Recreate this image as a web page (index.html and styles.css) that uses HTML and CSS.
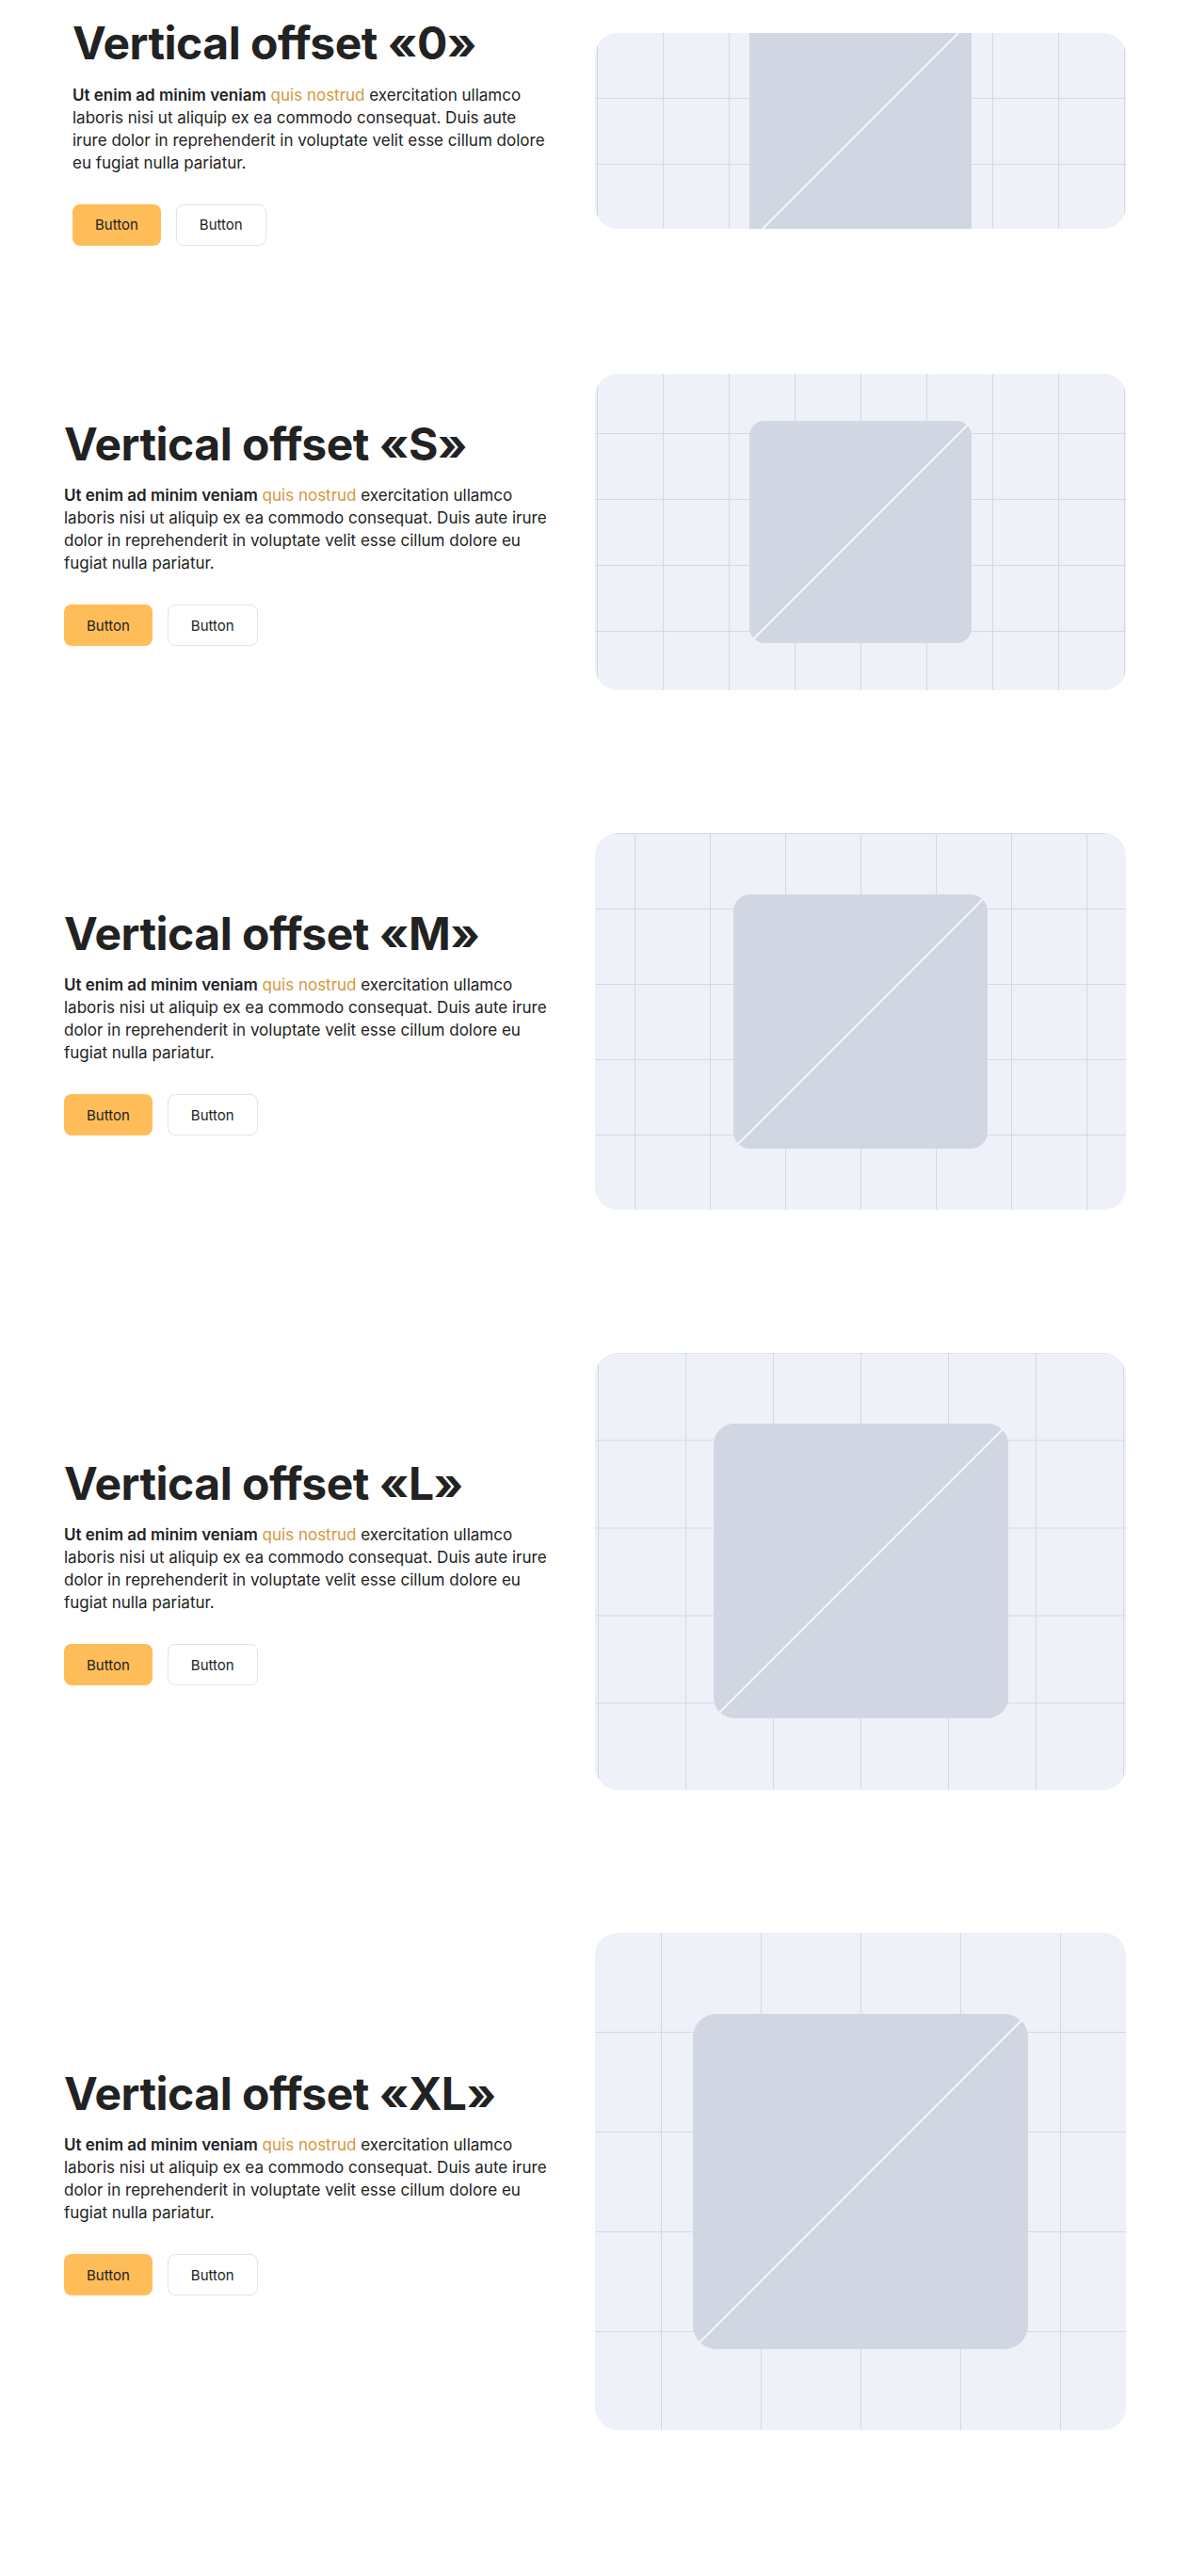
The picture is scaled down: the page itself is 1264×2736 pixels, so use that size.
FILE: index.html
```html
<!DOCTYPE html>
<html lang="en">
<head>
<meta charset="utf-8">
<title>Vertical offset</title>
<link rel="stylesheet" href="styles.css">
</head>
<body>
<main class="page">
  <section class="row row--first">
    <div class="copy copy--indent">
      <h2 class="title">Vertical offset «0»</h2>
      <p class="text"><b>Ut enim ad minim veniam</b> <span class="accent">quis nostrud</span> exercitation ullamco laboris nisi ut aliquip ex ea commodo consequat. Duis aute irure dolor in reprehenderit in voluptate velit esse cillum dolore eu fugiat nulla pariatur.</p>
      <div class="actions"><button class="btn btn--primary">Button</button><button class="btn btn--ghost">Button</button></div>
    </div>
    <div class="media media--0"><div class="pic"></div></div>
  </section>

  <section class="row">
    <div class="copy">
      <h2 class="title">Vertical offset «S»</h2>
      <p class="text"><b>Ut enim ad minim veniam</b> <span class="accent">quis nostrud</span> exercitation ullamco laboris nisi ut aliquip ex ea commodo consequat. Duis aute irure dolor in reprehenderit in voluptate velit esse cillum dolore eu fugiat nulla pariatur.</p>
      <div class="actions"><button class="btn btn--primary">Button</button><button class="btn btn--ghost">Button</button></div>
    </div>
    <div class="media media--s"><div class="pic"></div></div>
  </section>

  <section class="row">
    <div class="copy">
      <h2 class="title">Vertical offset «M»</h2>
      <p class="text"><b>Ut enim ad minim veniam</b> <span class="accent">quis nostrud</span> exercitation ullamco laboris nisi ut aliquip ex ea commodo consequat. Duis aute irure dolor in reprehenderit in voluptate velit esse cillum dolore eu fugiat nulla pariatur.</p>
      <div class="actions"><button class="btn btn--primary">Button</button><button class="btn btn--ghost">Button</button></div>
    </div>
    <div class="media media--m"><div class="pic"></div></div>
  </section>

  <section class="row">
    <div class="copy">
      <h2 class="title">Vertical offset «L»</h2>
      <p class="text"><b>Ut enim ad minim veniam</b> <span class="accent">quis nostrud</span> exercitation ullamco laboris nisi ut aliquip ex ea commodo consequat. Duis aute irure dolor in reprehenderit in voluptate velit esse cillum dolore eu fugiat nulla pariatur.</p>
      <div class="actions"><button class="btn btn--primary">Button</button><button class="btn btn--ghost">Button</button></div>
    </div>
    <div class="media media--l"><div class="pic"></div></div>
  </section>

  <section class="row">
    <div class="copy">
      <h2 class="title">Vertical offset «XL»</h2>
      <p class="text"><b>Ut enim ad minim veniam</b> <span class="accent">quis nostrud</span> exercitation ullamco laboris nisi ut aliquip ex ea commodo consequat. Duis aute irure dolor in reprehenderit in voluptate velit esse cillum dolore eu fugiat nulla pariatur.</p>
      <div class="actions"><button class="btn btn--primary">Button</button><button class="btn btn--ghost">Button</button></div>
    </div>
    <div class="media media--xl"><div class="pic"></div></div>
  </section>
</main>
</body>
</html>
```

FILE: styles.css
```css
html, body {
  margin: 0;
  padding: 0;
  background: #ffffff;
}

body {
  font-family: Inter, "Noto Sans", "Liberation Sans", sans-serif;
  color: #222222;
  -webkit-font-smoothing: antialiased;
}

.page {
  padding: 0 68px;
}

.row {
  display: flex;
  align-items: center;
  padding: 76px 0;
}

.row--first {
  padding: 17px 0 60px;
}

.copy {
  flex: 0 0 564px;
  box-sizing: border-box;
}

.copy--indent {
  padding-left: 9px;
}

.title {
  margin: 0 0 14px;
  font-size: 48px;
  line-height: 57.6px;
  font-weight: 700;
  letter-spacing: -0.5px;
  color: #222222;
}

.text {
  max-width: 522px;
  margin: 0 0 32px;
  font-size: 17px;
  line-height: 24px;
  font-weight: 400;
  color: #222222;
}

.copy--indent .text {
  max-width: 506px;
}

.text b {
  font-weight: 600;
}

.accent {
  color: #d6963a;
}

.actions {
  display: flex;
  gap: 16px;
}

.btn {
  height: 44px;
  padding: 0 24px;
  border-radius: 8px;
  font-family: Inter, "Noto Sans", sans-serif;
  font-size: 15px;
  font-weight: 400;
  color: #222222;
  cursor: pointer;
}

.btn--primary {
  background: #ffbd59;
  border: 0;
}

.btn--ghost {
  background: #ffffff;
  border: 1px solid #e3e3e3;
}

.media {
  --line: #d2d8e5;
  flex: 0 0 564px;
  height: var(--h);
  border-radius: 24px;
  overflow: hidden;
  display: flex;
  align-items: center;
  justify-content: center;
  background-color: #eef1f8;
  background-image:
    linear-gradient(to right, var(--line) 1px, transparent 1px),
    linear-gradient(to bottom, var(--line) 1.5px, transparent 1.5px);
  background-size: var(--g) var(--g);
  background-position: calc(50% + var(--g) / 2) 50%;
}

.pic {
  flex: 0 0 auto;
  width: var(--p);
  height: var(--p);
  border-radius: var(--r);
  background-color: #d0d7e3;
  background-image: linear-gradient(to top left,
    transparent calc(50% - 0.8px),
    #f3f5f9 calc(50% - 0.8px),
    #f3f5f9 calc(50% + 0.8px),
    transparent calc(50% + 0.8px));
}

.media--0 { --h: 208px; --g: 70px; --p: 236px; --r: 16px; }
.media--s { --h: 336px; --g: 70px; --p: 236px; --r: 16px; }
.media--m { --h: 400px; --g: 80px; --p: 270px; --r: 18px; }
.media--l { --h: 464px; --g: 93px; --p: 313px; --r: 22px; }
.media--xl { --h: 528px; --g: 106px; --p: 356px; --r: 25px; }
```
